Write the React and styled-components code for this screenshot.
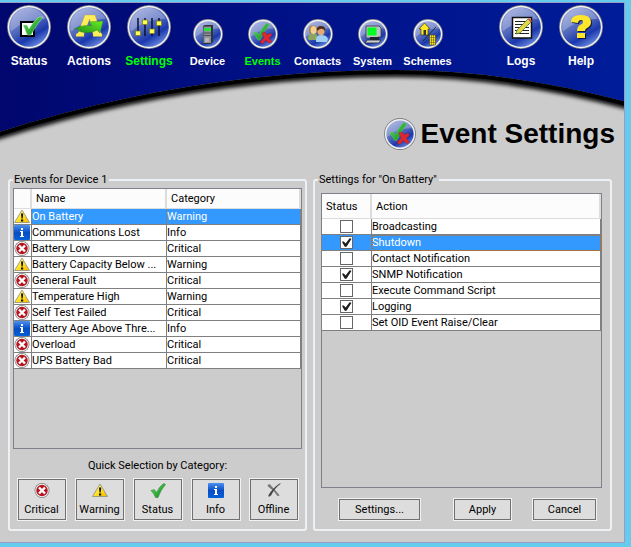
import React, { useState } from 'react';
import styled, { createGlobalStyle } from 'styled-components';

const GlobalStyle = createGlobalStyle`
* { box-sizing: border-box; }
html { background: #66ccee; }
body {
    margin: 0;
    background: #66ccee;
    color: #000;
    font-family: Roboto, "Noto Sans", sans-serif;
    font-size: 11px;
    line-height: 14px;
}
`

/* window and banner */
const Window = styled.main`
    position: relative;
    margin: 2px 6px 4px 0;
    background: #cccccc;
    border: solid #9a9ac8;
    border-width: 1px 1px 1px 0;
`
const Banner = styled.svg`
    position: absolute;
    top: 0;
    left: 0;
    width: 100%;
    height: 150px;
`
const Nav = styled.nav`
    position: relative;
    display: flex;
    align-items: flex-end;
    padding: 2px 15px 0 1px;
`
const NavGroup = styled.div`
    display: flex;
    align-items: flex-end;
    gap: ${props => props.$small ? 0 : 4}px;
    margin-right: ${props => props.$small ? 'auto' : '3px'};
    &:last-child{
        margin-right: 0;
    }
`
const NavLink = styled.a`
    display: flex;
    flex-direction: column;
    align-items: center;
    gap: 5px;
    width: ${props => props.$small ? 55 : 56}px;
    color: ${props => props.$active ? '#00ff00' : '#ffffff'};
    font-family: "Liberation Sans", Arial, sans-serif;
    font-size: ${props => props.$small ? 11 : 12}px;
    font-weight: bold;
    text-decoration: none;
`
const TitleBar = styled.header`
    position: relative;
    display: flex;
    align-items: center;
    justify-content: flex-end;
    gap: 4px;
    height: 35px;
    margin: 48px 9px 22px 0;
    svg{
        width: 34px;
        height: 32px;
    }
`
const Title = styled.h1`
    margin: 0;
    font-family: "Liberation Sans", Arial, sans-serif;
    font-size: 28px;
    line-height: 35px;
`

/* panels */
const Panels = styled.div`
    display: grid;
    grid-template-columns: 1fr 1fr;
    gap: 6px;
    padding: 0 12px 11px 8px;
`
const Panel = styled.fieldset`
    min-width: 0;
    margin: 0;
    padding: 1px 3px 8px;
    border: 2px solid #eef1f4;
    border-radius: 3px;
`
const Legend = styled.legend`
    padding: 0 2px 0 1px;
`
const PanelBody = styled.div`
    padding: 5px 5px 0 3px;
`
const ListBox = styled.div`
    height: ${props => props.$height}px;
    border: 1px solid #7f808a;
    overflow: hidden;
`
const Table = styled.table`
    width: 100%;
    table-layout: fixed;
    border-collapse: separate;
    border-spacing: 0;
`
const Th = styled.th`
    width: ${props => props.$width ? props.$width + 'px' : 'auto'};
    height: ${props => props.$height}px;
    padding: 1px 4px 0;
    background: #fcfcfc;
    border: solid #dcdcdc;
    border-width: 0 2px 1px 0;
    font-weight: normal;
    text-align: left;
`
const Row = styled.tr`
    background: ${props => props.$selected ? '#3399ff' : '#ffffff'};
    color: ${props => props.$selected ? '#ffffff' : '#000000'};
    cursor: default;
`
const Td = styled.td`
    height: 16px;
    padding: 0;
    border: solid #808080;
    border-width: 0 1px 1px 0;
    line-height: 15px;
    white-space: nowrap;
    overflow: hidden;
    text-overflow: ellipsis;
    outline: ${props => props.$focused ? '1px dotted #cc6600' : 'none'};
    outline-offset: -1px;
`
const IconTd = styled(Td)`
    background: #ffffff;
    text-overflow: clip;
    svg{
        display: block;
    }
`
const CheckTd = styled(Td)`
    text-align: center;
`
const Check = styled.input`
    appearance: none;
    display: block;
    width: 13px;
    height: 13px;
    margin: 0 auto;
    background: #ffffff;
    border: 1px solid #666666;
    &:checked::before{
        content: "";
        display: block;
        width: 11px;
        height: 11px;
        background: #1c1c1c;
        clip-path: polygon(8% 44%, 26% 40%, 42% 60%, 78% 12%, 96% 16%, 50% 88%, 34% 88%);
    }
`

/* buttons */
const Button = styled.button`
    padding: 0;
    width: ${props => props.$width}px;
    height: 23px;
    color: #000;
    background: #dddddd;
    border: 1px solid #f2f2f2;
    box-shadow: inset 0 0 0 1px #707070;
    font: inherit;
    cursor: pointer;
    &:hover{
        background: #e8e8e8;
    }
`
const QuickButton = styled(Button)`
    display: flex;
    flex-direction: column;
    align-items: center;
    justify-content: center;
    gap: 5px;
    height: 43px;
`
const QuickLabel = styled.div`
    margin: 10px 0 5px;
    text-align: center;
`
const QuickRow = styled.div`
    display: flex;
    justify-content: center;
    gap: 8px;
`
const ActionRow = styled.div`
    display: flex;
    justify-content: flex-end;
    gap: 20px;
    margin-top: 10px;
    padding-right: 5px;
    button:first-child{
        margin-right: auto;
        margin-left: 17px;
    }
`

/* round glass button used by the navigation and the title */
const Disc = ({ size, children }) => {
    const c = size / 2
    return <svg width={size + 2} height={size} viewBox={`-1 0 ${size + 2} ${size}`} aria-hidden="true">
        <circle cx={c} cy={c} r={c} fill="#7d7f88" />
        <circle cx={c} cy={c} r={c - 0.8} fill="#f1f1ee" />
        <circle cx={c} cy={c} r={c - 2.2} fill="url(#glass)" />
        <path d={`M${size * 0.09} ${size * 0.6}A${size * 0.42} ${size * 0.42} 0 0 1 ${size * 0.88} ${size * 0.32}Q${size * 0.45} ${size * 0.3} ${size * 0.09} ${size * 0.6}Z`} fill="#ffffff" opacity="0.25" />
        {children}
    </svg>
}

const Defs = () => <defs>
    <linearGradient id="sky" x1="0" x2="1" y1="0" y2="0">
        <stop offset="0" stopColor="#00066c" />
        <stop offset="0.5" stopColor="#00128a" />
        <stop offset="1" stopColor="#001c98" />
    </linearGradient>
    <linearGradient id="glass" x1="0.1" x2="0.7" y1="0" y2="1">
        <stop offset="0" stopColor="#98a4dc" />
        <stop offset="0.5" stopColor="#5068bc" />
        <stop offset="0.75" stopColor="#1a38ac" />
        <stop offset="1" stopColor="#6c8ce0" />
    </linearGradient>
    <linearGradient id="green" x1="0" x2="1" y1="0" y2="1">
        <stop offset="0" stopColor="#78e070" />
        <stop offset="0.5" stopColor="#34b438" />
        <stop offset="1" stopColor="#128022" />
    </linearGradient>
    <linearGradient id="lime" x1="0" x2="1" y1="1" y2="0">
        <stop offset="0" stopColor="#1b8a1b" />
        <stop offset="1" stopColor="#6af020" />
    </linearGradient>
    <linearGradient id="blue" x1="0" x2="0" y1="0" y2="1">
        <stop offset="0" stopColor="#4a90f0" />
        <stop offset="0.5" stopColor="#0a4cc4" />
        <stop offset="1" stopColor="#0560d8" />
    </linearGradient>
    <linearGradient id="amber" x1="0" x2="1" y1="0" y2="1">
        <stop offset="0" stopColor="#fff9b0" />
        <stop offset="0.55" stopColor="#ffe020" />
        <stop offset="1" stopColor="#f0b800" />
    </linearGradient>
    <filter id="soft" x="-5%" y="-20%" width="110%" height="150%">
        <feGaussianBlur stdDeviation="2" />
    </filter>
</defs>

const curve = 'M-10 132Q190 67 395 67Q510 67 634 101'

const BannerArt = () => <Banner viewBox="0 0 624 150" preserveAspectRatio="none" aria-hidden="true">
    <Defs />
    <path d={curve} transform="translate(0 4)" fill="none" stroke="#000" strokeWidth="6" filter="url(#soft)" />
    <path d={curve + 'V-10H-10Z'} fill="url(#sky)" />
    <path d={curve} transform="translate(0 2)" fill="none" stroke="#000" strokeWidth="4" />
</Banner>

const StatusIcon = () => <Disc size={44}>
    <path d="M14 17H27V31H14Z" fill="#fff" stroke="#000" strokeWidth="2" />
    <path d="M16 20L20 20L22 24Q27 15 32 12L36 12Q29 20 24 30L20 30Q18 24 16 20Z" fill="url(#green)" stroke="#e6f6e2" strokeWidth="0.4" />
</Disc>

const ActionsIcon = () => <Disc size={44}>
    <path d="M9 31.500V29L11 28L18 10H28L34 28L35 29V31.500H26V29L25 26H18L17 29V31.500ZM20 21H24.500L22.500 14Z" fillRule="evenodd" fill="#ffed5a" stroke="#b8a020" strokeWidth="0.3" />
    <path d="M7 24Q17 19 25 21L22 17L36 16L33 28L30 25Q22 30 11 26L14 25Q11 24 7 24Z" fill="url(#lime)" stroke="#1b7a20" strokeWidth="0.4" />
</Disc>

const SettingsIcon = () => <Disc size={44}>
    {[[11, 28], [18, 17], [25, 26], [32, 18]].map(([x, y]) => <g key={x}>
        <path d={`M${x} 13V31`} stroke="#0b1030" strokeWidth="1.5" />
        <rect x={x - 2.5} y={y - 2} width="5" height="4.5" fill="#ffff50" stroke="#77771c" strokeWidth="0.7" />
    </g>)}
</Disc>

const DeviceIcon = () => <Disc size={30}>
    <path d="M10 7L12 6H20V23L18 25H10Z" fill="#303338" />
    <path d="M10.500 7.500H18V24H10.500Z" fill="#8d9199" />
    <path d="M11 9H18V12H11Z" fill="#25e43a" />
    <path d="M11 14H18M11 16.500H18" stroke="#4a4e55" />
    <path d="M12 19H16V23H12Z" fill="#b4b7bd" />
</Disc>

const EventsIcon = () => <Disc size={30}>
    <path d="M5 14L8 13L11 16Q14 8 19 4L21 6Q15 13 12 21L10 21Q8 17 5 14Z" fill="url(#green)" stroke="#58d058" strokeWidth="0.5" />
    <path d="M14 14L17 13L19 16L22 14L24 16L21 19L24 23L21 24L18 21L15 25L12 23L16 19Z" fill="#e02630" stroke="#a01820" strokeWidth="0.4" />
</Disc>

const ContactsIcon = () => <Disc size={30}>
    <path d="M5 20Q5 14 10 14Q15 14 15 20V21H6Z" fill="#8aa55c" />
    <path d="M6.500 14Q5 6 10 6.500Q15 6 14 14Z" fill="#a8792c" />
    <ellipse cx="10.500" cy="11" rx="3" ry="4" fill="#f2cf96" />
    <path d="M13 23Q12 16 18 16Q24 16 25 20L24 23Z" fill="#9fd0f4" />
    <ellipse cx="18" cy="12" rx="3.600" ry="4.200" fill="#e4a972" />
    <path d="M14 12Q13 7 18 7Q23 7 22 12Q20 9 17 10Z" fill="#4c2e1c" />
</Disc>

const SystemIcon = () => <Disc size={30}>
    <path d="M8 7H21L23 9V18H20L19 19H8Z" fill="#bfc2c4" stroke="#30343c" strokeWidth="0.8" />
    <path d="M9.500 8.500H18.500V16.500H9.500Z" fill="#00ff20" />
    <path d="M12 18H21V21H12Z" fill="#202430" />
    <path d="M9 21H23L21 24H7Z" fill="#c9ccce" stroke="#202430" strokeWidth="0.8" />
</Disc>

const SchemesIcon = () => <Disc size={30}>
    <path d="M6 10L11.500 4L17 10H15V16H8V10Z" fill="#ffe91c" stroke="#222" strokeWidth="0.6" />
    <path d="M10.500 11H13V16H10.500Z" fill="#333" />
    <path d="M10 22L23 8" stroke="#182010" strokeWidth="0.8" />
    <path d="M16.500 16H22.500V26H16.500Z" fill="#ffe91c" stroke="#333" strokeWidth="0.6" />
    <path d="M18.500 16V26M20.500 16V26M16.500 18.500H22.500M16.500 21H22.500M16.500 23.500H22.500" stroke="#6b6210" strokeWidth="0.6" />
</Disc>

const LogsIcon = () => <Disc size={44}>
    <path d="M13.500 12.500H32.500V33H13.500Z" fill="#fff" stroke="#111" strokeWidth="1.5" />
    <path d="M16 16.500H30M16 19.500H30M16 22.500H30M16 25.500H30M16 28.500H30" stroke="#222" strokeWidth="1" />
    <path d="M17 29L18 25L29 14L32 17L21 28Z" fill="#e2d648" stroke="#44702a" strokeWidth="0.7" />
    <path d="M29 14L30 13L33 16L32 17.500Z" fill="#d44b45" />
</Disc>

const HelpIcon = () => <Disc size={44}>
    <path d="M12 17Q12 10 22 10Q32 10 32 17Q32 21 28 23Q26 24 26 26H18Q18 21 22 19.500Q24 18.500 24 17Q24 15 22 15Q19.500 15 19 18ZM18 28H26V33H18Z" transform="translate(1 1)" fill="#10154a" />
    <path d="M12 17Q12 10 22 10Q32 10 32 17Q32 21 28 23Q26 24 26 26H18Q18 21 22 19.500Q24 18.500 24 17Q24 15 22 15Q19.500 15 19 18ZM18 28H26V33H18Z" fill="#ffe62a" />
</Disc>

const Glyph = ({ kind }) => {
    if (kind === 'Critical') return <svg width="16" height="15" viewBox="0 0 16 15" aria-hidden="true">
        <circle cx="8" cy="7.500" r="7.500" fill="#808080" />
        <circle cx="8" cy="7.500" r="6.700" fill="#f2f2f2" />
        <circle cx="8" cy="7.500" r="5.700" fill="#b81420" />
        <path d="M5 4.500L11 10.500M11 4.500L5 10.500" stroke="#fff" strokeWidth="2.400" />
    </svg>
    if (kind === 'Warning') return <svg width="16" height="15" viewBox="0 0 16 15" aria-hidden="true">
        <path d="M8 1L15.500 13.500H0.500Z" fill="url(#amber)" stroke="#8c8c80" strokeWidth="0.8" strokeLinejoin="round" />
        <path d="M7 4.500H9.200L8.700 9.500H7.500ZM7 10.500H9.200V12.500H7Z" fill="#111" />
    </svg>
    if (kind === 'Info') return <svg width="16" height="15" viewBox="0 0 16 15" aria-hidden="true">
        <rect width="16" height="15" rx="1" fill="url(#blue)" />
        <path d="M7 3H9V5H7ZM6 6H9V11H10V12H6V11H7V7H6Z" fill="#fff" />
    </svg>
    if (kind === 'Status') return <svg width="16" height="15" viewBox="0 0 16 16" aria-hidden="true">
        <path d="M0.500 8L4 7L6.500 10Q9 4 14 0.500L16 1.500Q11 7 8 15.500H5.500Q3.500 11 0.500 8Z" fill="url(#green)" stroke="#17752a" strokeWidth="0.5" />
    </svg>
    return <svg width="16" height="15" viewBox="0 0 16 16" aria-hidden="true">
        <path d="M1 2Q4 0 5 3L14 13L12 14Q8 8 2 4Z" fill="#777" />
        <path d="M15.500 0.500Q9 5 5 13L2.500 15L2 13Q7 5 14 0.500Z" fill="#444" />
    </svg>
}

const events = [
    ['On Battery', 'Warning'],
    ['Communications Lost', 'Info'],
    ['Battery Low', 'Critical'],
    ['Battery Capacity Below ...', 'Warning'],
    ['General Fault', 'Critical'],
    ['Temperature High', 'Warning'],
    ['Self Test Failed', 'Critical'],
    ['Battery Age Above Thre...', 'Info'],
    ['Overload', 'Critical'],
    ['UPS Battery Bad', 'Critical'],
]

const actions = ['Broadcasting', 'Shutdown', 'Contact Notification', 'SNMP Notification',
    'Execute Command Script', 'Logging', 'Set OID Event Raise/Clear']

const NavItem = ({ icon: Icon, label, active, small }) => (
    <NavLink href="#" $active={active} $small={small} aria-current={active ? 'page' : undefined}>
        <Icon />
        {label}
    </NavLink>
)

const EventsPanel = () => {
    const [selected, setSelected] = useState(0)
    return <Panel>
        <Legend>Events for Device 1</Legend>
        <ListBox $height={261}>
            <Table>
                <thead>
                    <tr>
                        <Th $width={18} $height={20} />
                        <Th $width={135} $height={20}>Name</Th>
                        <Th $height={20}>Category</Th>
                    </tr>
                </thead>
                <tbody>
                    {events.map(([name, category], i) => (
                        <Row key={name} $selected={i === selected} onClick={() => setSelected(i)}>
                            <IconTd><Glyph kind={category} /></IconTd>
                            <Td>{name}</Td>
                            <Td>{category}</Td>
                        </Row>
                    ))}
                </tbody>
            </Table>
        </ListBox>
        <QuickLabel>Quick Selection by Category:</QuickLabel>
        <QuickRow>
            {['Critical', 'Warning', 'Status', 'Info', 'Offline'].map(kind => (
                <QuickButton key={kind} type="button" $width={50}>
                    <Glyph kind={kind} />
                    {kind}
                </QuickButton>
            ))}
        </QuickRow>
    </Panel>
}

const SettingsPanel = () => {
    const [checked, setChecked] = useState(['Shutdown', 'SNMP Notification', 'Logging'])
    const toggle = name => setChecked(
        checked.includes(name) ? checked.filter(n => n !== name) : [...checked, name]
    )
    return <Panel>
        <Legend>Settings for "On Battery"</Legend>
        <PanelBody>
            <ListBox $height={295}>
                <Table>
                    <thead>
                        <tr>
                            <Th $width={50} $height={25}>Status</Th>
                            <Th $height={25}>Action</Th>
                        </tr>
                    </thead>
                    <tbody>
                        {actions.map(name => (
                            <Row key={name} $selected={name === 'Shutdown'}>
                                <CheckTd>
                                    <Check
                                        type="checkbox"
                                        id={name}
                                        checked={checked.includes(name)}
                                        onChange={() => toggle(name)}
                                    />
                                </CheckTd>
                                <Td $focused={name === 'Shutdown'}><label htmlFor={name}>{name}</label></Td>
                            </Row>
                        ))}
                    </tbody>
                </Table>
            </ListBox>
            <ActionRow>
                <Button type="button" $width={83}>Settings...</Button>
                <Button type="button" $width={59}>Apply</Button>
                <Button type="button" $width={65}>Cancel</Button>
            </ActionRow>
        </PanelBody>
    </Panel>
}

const App = () => {
    return <>
        <GlobalStyle />
        <Window>
            <BannerArt />
            <Nav>
                <NavGroup>
                    <NavItem icon={StatusIcon} label="Status" />
                    <NavItem icon={ActionsIcon} label="Actions" />
                    <NavItem icon={SettingsIcon} label="Settings" active />
                </NavGroup>
                <NavGroup $small>
                    <NavItem icon={DeviceIcon} label="Device" small />
                    <NavItem icon={EventsIcon} label="Events" small active />
                    <NavItem icon={ContactsIcon} label="Contacts" small />
                    <NavItem icon={SystemIcon} label="System" small />
                    <NavItem icon={SchemesIcon} label="Schemes" small />
                </NavGroup>
                <NavGroup>
                    <NavItem icon={LogsIcon} label="Logs" />
                    <NavItem icon={HelpIcon} label="Help" />
                </NavGroup>
            </Nav>
            <TitleBar>
                <EventsIcon />
                <Title>Event Settings</Title>
            </TitleBar>
            <Panels>
                <EventsPanel />
                <SettingsPanel />
            </Panels>
        </Window>
    </>
}

export default App
